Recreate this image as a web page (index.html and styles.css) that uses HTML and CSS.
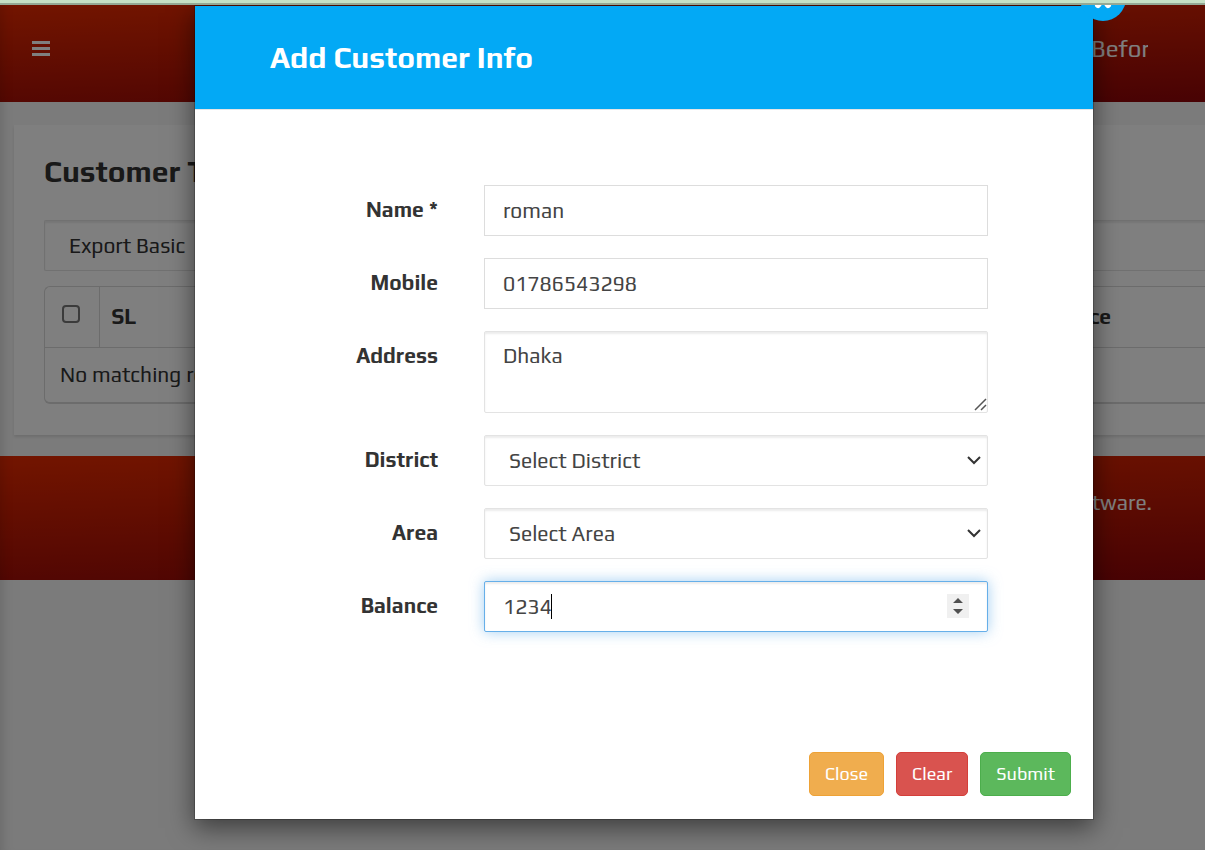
FILE: index.html
```html
<!DOCTYPE html>
<html lang="en">
<head>
<meta charset="utf-8">
<meta name="viewport" content="width=device-width, initial-scale=1">
<title>Customer Info</title>
<link rel="stylesheet" href="styles.css">
</head>
<body>
<div class="strip"></div>
<div class="app">
  <header class="topbar">
    <button class="menu" type="button" aria-label="Menu">
      <svg width="18" height="15" viewBox="0 0 18 15" fill="currentColor" shape-rendering="crispEdges"><path d="M0 0h18v3H0zM0 6h18v3H0zM0 12h18v3H0z"/></svg>
    </button>
    <div class="ticker">Before</div>
  </header>
  <main class="content">
    <section class="panel">
      <h1 class="panel-title">Customer Table</h1>
      <select class="export" aria-label="Export"><option>Export Basic</option></select>
      <div class="table-box">
        <table class="table">
          <thead>
            <tr><th class="check-cell"><input class="check" type="checkbox" aria-label="Select all"></th><th>SL</th><th class="balance-cell">Balance</th></tr>
          </thead>
          <tbody>
            <tr><td colspan="3">No matching records found</td></tr>
          </tbody>
        </table>
      </div>
    </section>
  </main>
  <footer class="footer">Software.</footer>

  <div class="backdrop">
    <div class="dialog" role="dialog" aria-labelledby="title">
      <button class="round-close" type="button" aria-label="Close dialog">
        <svg width="28" height="28" viewBox="0 0 28 28" fill="none" stroke="currentColor" stroke-width="6" stroke-linecap="round"><path d="M9 7l10 14M19 7L9 21"/></svg>
      </button>
      <div class="dialog-head"><h2 class="dialog-title" id="title">Add Customer Info</h2></div>
      <form class="form">
        <label class="label" for="name">Name *</label>
        <input class="field" id="name" type="text" value="roman">
        <label class="label" for="mobile">Mobile</label>
        <input class="field" id="mobile" type="text" value="01786543298">
        <label class="label" for="address">Address</label>
        <div class="field-box">
          <textarea class="field area soft" id="address">Dhaka</textarea>
          <svg class="grip" width="13" height="13" viewBox="0 0 13 13" fill="none" stroke="#555" stroke-width="1.5"><path d="M1 12L12 1M7 12l5-5"/></svg>
        </div>
        <label class="label" for="district">District</label>
        <div class="field-box">
          <select class="field soft" id="district"><option>Select District</option></select>
          <svg class="chevron" width="14" height="9" viewBox="0 0 14 9" fill="none" stroke="#333" stroke-width="2"><path d="M1 1l6 6 6-6"/></svg>
        </div>
        <label class="label" for="area">Area</label>
        <div class="field-box">
          <select class="field soft" id="area"><option>Select Area</option></select>
          <svg class="chevron" width="14" height="9" viewBox="0 0 14 9" fill="none" stroke="#333" stroke-width="2"><path d="M1 1l6 6 6-6"/></svg>
        </div>
        <label class="label" for="balance">Balance</label>
        <div class="field-box">
          <input class="field active" id="balance" type="number" value="1234">
          <span class="caret"></span>
          <svg class="spinner" width="22" height="24" viewBox="0 0 22 24"><path fill="#f0f0f0" d="M0 0h22v24H0z"/><path fill="#505050" d="M6 9l5-5 5 5zM6 15l5 5 5-5z"/></svg>
        </div>
      </form>
      <div class="actions">
        <button class="btn btn-close" type="button">Close</button>
        <button class="btn btn-clear" type="button">Clear</button>
        <button class="btn btn-submit" type="button">Submit</button>
      </div>
    </div>
  </div>
</div>
</body>
</html>
```
FILE: styles.css
```css
* { box-sizing: border-box; }

body {
  margin: 0;
  height: 100vh;
  display: flex;
  flex-direction: column;
  overflow: hidden;
  background: #f7f7f7;
  color: #333;
  font: 21px/30px Play, "Noto Sans", sans-serif;
}

input, select, textarea, button { font: inherit; color: inherit; }

.strip {
  flex: none;
  height: 5px;
  background: #c5e1c6;
  border-bottom: 2px solid #94a995;
}

.app {
  flex: 1;
  position: relative;
  overflow: hidden;
}

.topbar, .footer {
  color: #fff;
  background: linear-gradient(178deg, #e62a00, #900508);
}

.topbar {
  display: flex;
  align-items: center;
  justify-content: space-between;
  height: 97px;
  padding: 0 57px 10px 32px;
}

.menu {
  display: flex;
  padding: 0;
  border: 0;
  background: none;
}

.ticker {
  width: 57px;
  overflow: hidden;
  white-space: nowrap;
  font-size: 24px;
  line-height: 32px;
}

.content { padding: 23px 0 21px 14px; }

.panel {
  padding: 30px 0 31px 30px;
  background: #fff;
  box-shadow: 0 2px 3px rgba(0, 0, 0, .12);
}

.panel-title {
  margin: 0 0 31px;
  font-size: 30px;
  line-height: 34px;
}

.export {
  display: block;
  width: 100%;
  height: 51px;
  padding: 0 24px;
  border: 1px solid #e3e3e3;
  border-right: 0;
  border-radius: 2px 0 0 2px;
  background: #fff;
  box-shadow: inset 0 2px 2px rgba(0, 0, 0, .08);
  appearance: none;
}

.table-box {
  margin-top: 15px;
  border: 1px solid #d8d8d8;
  border-width: 1px 0 2px 1px;
  border-radius: 6px 0 0 6px;
}

.table {
  width: 100%;
  border-collapse: collapse;
  text-align: left;
}

.table th { height: 60px; padding: 0 12px; }
.table td { height: 55px; padding: 0 15px; border-top: 1px solid #d8d8d8; }
.table .check-cell {
  width: 54px;
  padding: 0 0 6px 17px;
  border-right: 1px solid #d8d8d8;
}
.table .balance-cell { text-align: right; padding-right: 94px; }

.check {
  display: block;
  appearance: none;
  width: 18px;
  height: 18px;
  margin: 0;
  border: 2px solid #767676;
  border-radius: 4px;
}

.footer {
  height: 124px;
  padding: 32px 53px;
  text-align: right;
}

.backdrop {
  position: absolute;
  inset: 0;
  padding: 0 111px 0 194px;
  background: rgba(0, 0, 0, .5);
  box-shadow: inset 12px 0 12px -10px rgba(0, 0, 0, .15);
}

.dialog {
  position: relative;
  border: 1px solid rgba(0, 0, 0, .2);
  background: #fff;
  background-clip: padding-box;
  box-shadow: 0 8px 24px rgba(0, 0, 0, .5);
}

.round-close {
  position: absolute;
  top: -31px;
  right: -33px;
  width: 46px;
  height: 46px;
  display: flex;
  align-items: center;
  justify-content: center;
  padding: 0;
  border: 0;
  border-radius: 50%;
  background: #03a9f5;
  color: #fff;
}

.dialog-head {
  padding: 32px 75px;
  background: #03a9f5;
  border-bottom: 1px solid #e5e5e5;
}

.dialog-title {
  margin: 0;
  color: #fff;
  font-size: 30px;
  line-height: 39px;
}

.form {
  display: grid;
  grid-template-columns: 243fr 504fr;
  gap: 22px 46px;
  padding: 75px 105px 120px 0;
}

.label {
  padding-top: 10px;
  text-align: right;
  font-weight: 700;
}

.field {
  display: block;
  width: 100%;
  height: 51px;
  margin: 0;
  padding: 9px 18px;
  border: 1px solid #ddd;
  border-radius: 0;
  background-color: #fff;
  outline: 0;
  color: #444;
}

.soft {
  border-color: #e3e3e3;
  border-radius: 2px;
  box-shadow: inset 0 2px 2px rgba(0, 0, 0, .08);
}

.area { height: 82px; }
.area::-webkit-resizer { display: none; }

select.field { padding: 0 24px; appearance: none; }

.field-box { position: relative; }

.grip, .chevron, .spinner, .caret {
  position: absolute;
  pointer-events: none;
}

.grip { right: 1px; bottom: 2px; }
.chevron { right: 7px; top: 21px; }
.spinner { right: 19px; top: 13px; }

.active {
  border-color: #66afe9;
  border-radius: 2px;
  box-shadow: inset 0 2px 2px rgba(0, 0, 0, .08), 0 0 14px rgba(102, 175, 233, .6);
}

.active::-webkit-inner-spin-button { appearance: none; }

.caret {
  left: 67px;
  top: 13px;
  width: 1px;
  height: 25px;
  background: #000;
}

.actions {
  display: flex;
  justify-content: flex-end;
  gap: 12px;
  padding: 0 22px 23px;
}

.btn {
  height: 44px;
  padding: 0 15px;
  border: 1px solid;
  border-radius: 5px;
  color: #fff;
  font-size: 18px;
}

.btn-close { background: #f0ad4e; border-color: #eea236; }
.btn-clear { background: #d9534f; border-color: #d43f3a; }
.btn-submit { background: #5cb85c; border-color: #4cae4c; }
```
